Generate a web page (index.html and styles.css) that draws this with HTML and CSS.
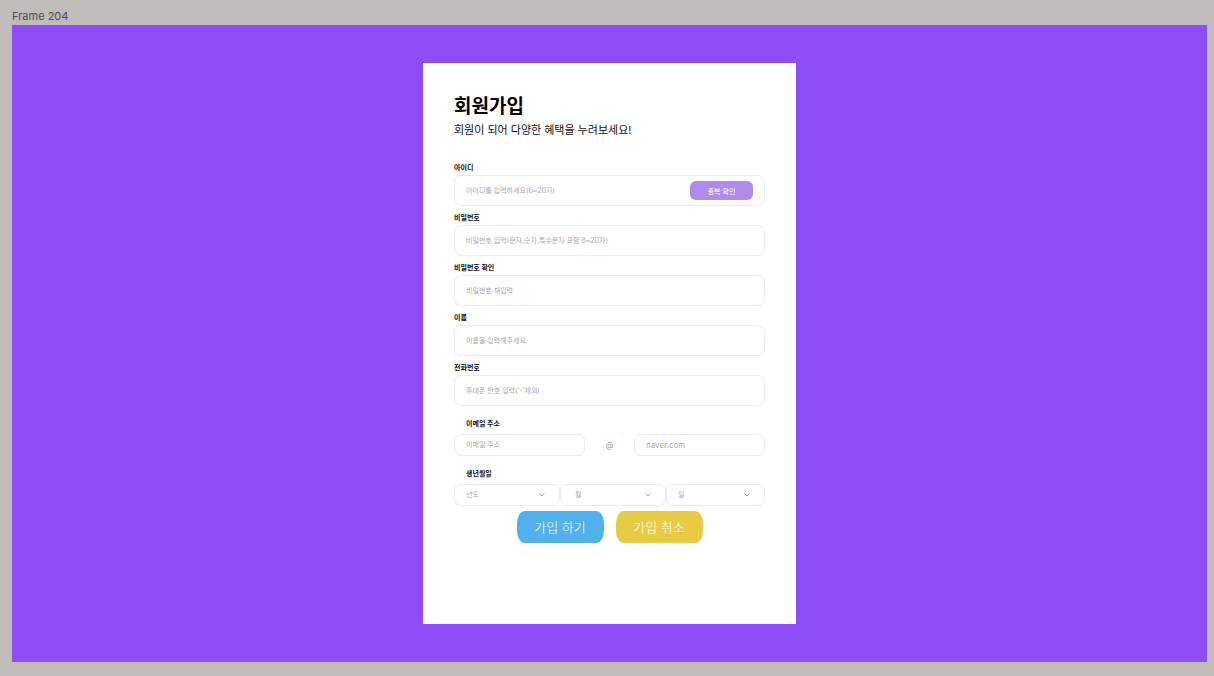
FILE: index.html
```html
<!DOCTYPE html>
<html lang="ko">
<head>
<meta charset="utf-8">
<meta name="viewport" content="width=device-width, initial-scale=1">
<title>회원가입</title>
<link rel="stylesheet" href="styles.css">
</head>
<body class="canvas">
  <div class="frame-name">Frame 204</div>
  <main class="frame">
    <form class="card">
      <h1 class="title">회원가입</h1>
      <p class="subtitle">회원이 되어 다양한 혜택을 누려보세요!</p>

      <div class="field">
        <label class="label" for="user-id">아이디</label>
        <div class="box">
          <input class="control" id="user-id" type="text" placeholder="아이디를 입력하세요(6~20자)">
          <button class="check" type="button">중복 확인</button>
        </div>
      </div>
      <div class="field">
        <label class="label" for="password">비밀번호</label>
        <div class="box">
          <input class="control" id="password" type="password" placeholder="비밀번호 입력(문자,숫자,특수문자 포함 8~20자)">
        </div>
      </div>
      <div class="field">
        <label class="label" for="password-again">비밀번호 확인</label>
        <div class="box">
          <input class="control" id="password-again" type="password" placeholder="비밀번호 재입력">
        </div>
      </div>
      <div class="field">
        <label class="label" for="name">이름</label>
        <div class="box">
          <input class="control" id="name" type="text" placeholder="이름을 입력해주세요">
        </div>
      </div>
      <div class="field">
        <label class="label" for="phone">전화번호</label>
        <div class="box">
          <input class="control" id="phone" type="tel" placeholder="휴대폰 번호 입력(‘-’제외)">
        </div>
      </div>

      <div class="group">
        <label class="label label-inset" for="email">이메일 주소</label>
        <div class="row row-email">
          <div class="box box-small">
            <input class="control" id="email" type="text" placeholder="이메일 주소">
          </div>
          <span class="at">@</span>
          <div class="box box-small">
            <input class="control control-domain" type="text" value="naver.com" aria-label="이메일 도메인">
          </div>
        </div>
      </div>

      <div class="group">
        <label class="label label-inset" for="year">생년월일</label>
        <div class="row row-birth">
          <div class="box box-small">
            <select class="control" id="year"><option>년도</option></select>
            <svg class="chevron" viewBox="0 0 6 4" aria-hidden="true"><path d="M0.5 0.5 3 3 5.5 0.5"/></svg>
          </div>
          <div class="box box-small box-month">
            <select class="control" aria-label="월"><option>월</option></select>
            <svg class="chevron" viewBox="0 0 6 4" aria-hidden="true"><path d="M0.5 0.5 3 3 5.5 0.5"/></svg>
          </div>
          <div class="box box-small">
            <select class="control" aria-label="일"><option>일</option></select>
            <svg class="chevron" viewBox="0 0 6 4" aria-hidden="true"><path d="M0.5 0.5 3 3 5.5 0.5"/></svg>
          </div>
        </div>
      </div>

      <div class="actions">
        <button class="action action-join" type="submit">가입 하기</button>
        <button class="action action-cancel" type="button">가입 취소</button>
      </div>
    </form>
  </main>
</body>
</html>
```
FILE: styles.css
```css
* {
  box-sizing: border-box;
}

.canvas {
  display: flex;
  flex-direction: column;
  min-height: 100vh;
  margin: 0;
  padding: 8px 7px 14px 12px;
  background: #c1bcba;
  font-family: Inter, "Noto Sans CJK KR", sans-serif;
}

.frame-name {
  height: 17px;
  font-size: 11px;
  line-height: 17px;
  color: #4e4b4a;
}

.frame {
  flex: 1;
  padding: 38px 16px;
  background: #8d4cf6;
}

.card {
  width: 100%;
  max-width: 373px;
  margin: 0 auto;
  padding: 30px 31px 81px;
  background: #fff;
}

.title {
  margin: 0;
  font-size: 19px;
  font-weight: 700;
  line-height: 28px;
  color: #000;
}

.subtitle {
  margin: 1px 0 22px;
  font-size: 11px;
  line-height: 16px;
  color: #111;
}

.field {
  margin-bottom: 4px;
}

.group {
  margin-top: 10px;
}

.label {
  display: block;
  font-size: 7px;
  font-weight: 700;
  line-height: 15px;
  color: #111;
}

.label-inset {
  margin-bottom: 3px;
  padding-left: 12px;
}

.box {
  position: relative;
  display: flex;
  align-items: center;
  height: 31px;
  padding: 0 11px;
  border: 1px solid #ebe9f1;
  border-radius: 7px;
}

.box-small {
  height: 22px;
}

.control {
  flex: 1;
  min-width: 0;
  padding: 0;
  border: 0;
  outline: 0;
  appearance: none;
  background: transparent;
  font-family: inherit;
  font-size: 7px;
  line-height: 16px;
  color: #aaa;
}

.control-domain {
  font-size: 8px;
}

.control::placeholder {
  color: #aaa;
  opacity: 1;
}

.check {
  width: 63px;
  height: 19px;
  padding: 0;
  border: 0;
  border-radius: 6px;
  background: #b08ce9;
  font-family: inherit;
  font-size: 7px;
  color: #fff;
}

.row {
  display: grid;
  align-items: center;
}

.row-email {
  grid-template-columns: minmax(0, 1fr) 49px minmax(0, 1fr);
}

.row-birth {
  grid-template-columns: 106fr 106fr 99fr;
}

.at {
  font-size: 8px;
  line-height: 16px;
  text-align: center;
  color: #999;
}

.box-month {
  padding-left: 14px;
}

.chevron {
  position: absolute;
  top: 8px;
  right: 14px;
  width: 6px;
  height: 4px;
  fill: none;
  stroke: #aaa;
  pointer-events: none;
}

.actions {
  display: flex;
  justify-content: center;
  gap: 12px;
  margin-top: 5px;
}

.action {
  width: 87px;
  height: 32px;
  padding: 0 0 2px;
  border: 0;
  border-radius: 8px / 12px;
  font-family: inherit;
  font-size: 13px;
  font-weight: 300;
  color: #fff;
}

.action-join {
  background: #52b1ea;
}

.action-cancel {
  background: #e8cb45;
}
```
